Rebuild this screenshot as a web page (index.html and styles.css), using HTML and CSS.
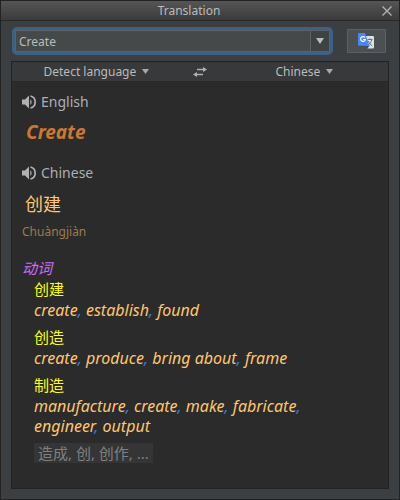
FILE: index.html
```html
<!DOCTYPE html>
<html lang="en">
<head>
<meta charset="utf-8">
<title>Translation</title>
<link rel="stylesheet" href="styles.css">
</head>
<body>
<main class="dialog">
  <header class="titlebar">
    <h1 class="title">Translation</h1>
    <button class="close" type="button" aria-label="Close">
      <svg width="10" height="10" viewBox="0 0 10 10"><path d="M.5.5l9 9M9.5.5l-9 9" stroke="#b4b4b4" stroke-width="1.3" fill="none"/></svg>
    </button>
  </header>
  <form class="search">
    <div class="combo">
      <input class="query" type="text" value="Create" aria-label="Text to translate">
      <button class="history" type="button" aria-label="History">
        <svg width="8" height="6" viewBox="0 0 8 6"><path d="M0 0h8L4 6z" fill="#bbb"/></svg>
      </button>
    </div>
    <button class="translate" type="button" aria-label="Translate">
      <svg width="16" height="16" viewBox="0 0 16 16">
        <path d="M6 3h9a1 1 0 0 1 1 1v10.500a1 1 0 0 1-1 1H9.500z" fill="#dfe1e3"/>
        <path d="M9.500 6.500h5M12 5.300v1.200M10.300 8c1 2.500 2.200 3.700 4 4.800M13.800 6.500c-.5 2.500-2 4.500-4 6" stroke="#69767c" stroke-width="1" fill="none"/>
        <path d="M8.300 12.500h3.200l-2 3z" fill="#2633c4"/>
        <path d="M1 0h6l4.500 12.800H1a1 1 0 0 1-1-1V1a1 1 0 0 1 1-1z" fill="#4688f4"/>
        <path d="M7 4.600A2.400 2.400 0 1 0 7.400 6.500H5.100" stroke="#fff" stroke-width="1.200" fill="none"/>
      </svg>
    </button>
  </form>
  <section class="panel">
    <div class="languages">
      <label class="language">
        <select class="choice" aria-label="Source language"><option>Detect language</option></select>
        <svg width="7" height="5" viewBox="0 0 7 5"><path d="M0 0h7L3.500 5z" fill="#aaa"/></svg>
      </label>
      <button class="swap" type="button" aria-label="Swap languages">
        <svg width="14" height="10" viewBox="0 0 14 10"><path d="M4 2.500h7M3 7.500h7" stroke="#afb1b3" stroke-width="1.600"/><path d="M10 0l4 2.500L10 5zM4 5L0 7.500 4 10z" fill="#afb1b3"/></svg>
      </button>
      <label class="language">
        <select class="choice" aria-label="Target language"><option>Chinese</option></select>
        <svg width="7" height="5" viewBox="0 0 7 5"><path d="M0 0h7L3.500 5z" fill="#aaa"/></svg>
      </label>
    </div>
    <div class="result">
      <div class="speech">
        <button class="speaker" type="button" aria-label="Listen in English">
          <svg width="14" height="14" viewBox="0 0 14 14"><path d="M0 4.500h3L7 .5v13l-4-4H0z" fill="#afb1b3"/><path d="M8.300 4.200c1.800 1.200 1.800 4.400 0 5.600z" fill="#afb1b3"/><path d="M8.500 1c6.200 1.500 6.200 10.500 0 12" stroke="#afb1b3" stroke-width="1.700" fill="none"/></svg>
        </button>
        <span>English</span>
      </div>
      <p class="source">Create</p>
      <div class="speech">
        <button class="speaker" type="button" aria-label="Listen in Chinese">
          <svg width="14" height="14" viewBox="0 0 14 14"><path d="M0 4.500h3L7 .5v13l-4-4H0z" fill="#afb1b3"/><path d="M8.300 4.200c1.800 1.200 1.800 4.400 0 5.600z" fill="#afb1b3"/><path d="M8.500 1c6.200 1.500 6.200 10.500 0 12" stroke="#afb1b3" stroke-width="1.700" fill="none"/></svg>
        </button>
        <span>Chinese</span>
      </div>
      <p class="target" lang="zh-CN">创建</p>
      <p class="pinyin">Chuàngjiàn</p>
      <h2 class="speech-part" lang="zh-CN">动词</h2>
      <dl class="entries">
        <dt lang="zh-CN">创建</dt>
        <dd><b>create</b>, <b>establish</b>, <b>found</b></dd>
        <dt lang="zh-CN">创造</dt>
        <dd><b>create</b>, <b>produce</b>, <b>bring about</b>, <b>frame</b></dd>
        <dt lang="zh-CN">制造</dt>
        <dd><b>manufacture</b>, <b>create</b>, <b>make</b>, <b>fabricate</b>, <b>engineer</b>, <b>output</b></dd>
      </dl>
      <button class="more" type="button" lang="zh-CN">造成, 创, 创作, ...</button>
    </div>
  </section>
</main>
</body>
</html>
```
FILE: styles.css
```css
* { box-sizing: border-box; }

body {
  margin: 0;
  background: #3c3f41;
  color: #bbb;
  font-family: "Noto Sans", "Noto Sans CJK SC", sans-serif;
  font-size: 12px;
}

h1, h2, p, dl, dd { margin: 0; font-weight: 400; }

button, input, select {
  margin: 0;
  padding: 0;
  border: 0;
  background: none;
  color: inherit;
  font: inherit;
}

svg { display: block; flex: none; }

.dialog {
  display: flex;
  flex-direction: column;
  min-height: 100vh;
  border: 1px solid #222;
}

.titlebar {
  display: grid;
  grid-template-columns: 24px 1fr 24px;
  align-items: center;
  height: 20px;
  border-bottom: 1px solid #282828;
  background: linear-gradient(#555, #3b3b3b);
}

.title {
  grid-column: 2;
  font-size: 12px;
  line-height: 20px;
  text-align: center;
  padding-right: 22px;
}

.close { display: flex; justify-content: center; }

.search {
  display: flex;
  align-items: center;
  gap: 14px;
  padding: 6px 13px 6px 11px;
}

.combo {
  display: flex;
  flex: 1;
  min-width: 0;
  height: 28px;
  border: 3px solid #3d6185;
  border-radius: 5px;
  background: #45494a;
}

.query {
  flex: 1;
  min-width: 0;
  padding: 0 3px;
  outline: 0;
  border: 1px solid #5e6061;
}

.history {
  display: flex;
  align-items: center;
  justify-content: center;
  width: 19px;
  border: 1px solid #5e6061;
  border-left: 0;
  background: #3f4244;
}

.translate {
  display: flex;
  align-items: center;
  justify-content: center;
  width: 39px;
  height: 24px;
  padding-right: 2px;
  border: 1px solid #5e6162;
  border-radius: 1px;
  background: #4c5052;
}

.panel {
  flex: 1;
  margin: 0 10px 10px;
  border: 1px solid #222;
  background: #2b2b2b;
}

.languages {
  display: grid;
  grid-template-columns: 1fr 40px 1fr;
  align-items: center;
  height: 20px;
  border-bottom: 1px solid #282828;
  background: #37393a;
}

.language {
  display: flex;
  align-items: center;
  justify-content: center;
  gap: 5px;
}

.choice { appearance: none; line-height: 18px; }

.swap { display: flex; justify-content: center; }

.result { padding: 9px 10px; }

.speech {
  display: flex;
  align-items: center;
  gap: 5px;
  color: #a9b0b6;
  font-size: 14px;
  line-height: 22px;
}

.source {
  padding: 8px 4px 19px;
  color: #cc7832;
  font-size: 19px;
  font-style: italic;
  font-weight: 700;
  line-height: 22px;
}

.target {
  padding: 8px 3px 6px;
  color: #ffc66d;
  font-size: 18px;
  line-height: 24px;
}

.pinyin {
  color: #9c7a4c;
  font-size: 12px;
  line-height: 20px;
}

.speech-part {
  margin-top: 16px;
  color: #cf6bfa;
  font-size: 15px;
  font-style: italic;
  line-height: 20px;
}

.entries {
  padding-left: 12px;
  font-size: 15px;
  line-height: 20px;
}

.entries dt { color: #ff0; line-height: 22px; }

.entries dd {
  max-width: 290px;
  margin-bottom: 6px;
  color: #2a83d8;
  font-size: 16px;
  font-style: italic;
}

.entries b { color: #ffc66d; font-weight: 400; }

.more {
  margin: 1px 0 0 12px;
  padding: 0 4px;
  background: #353535;
  color: #808080;
  font-size: 15px;
  line-height: 20px;
}
```
